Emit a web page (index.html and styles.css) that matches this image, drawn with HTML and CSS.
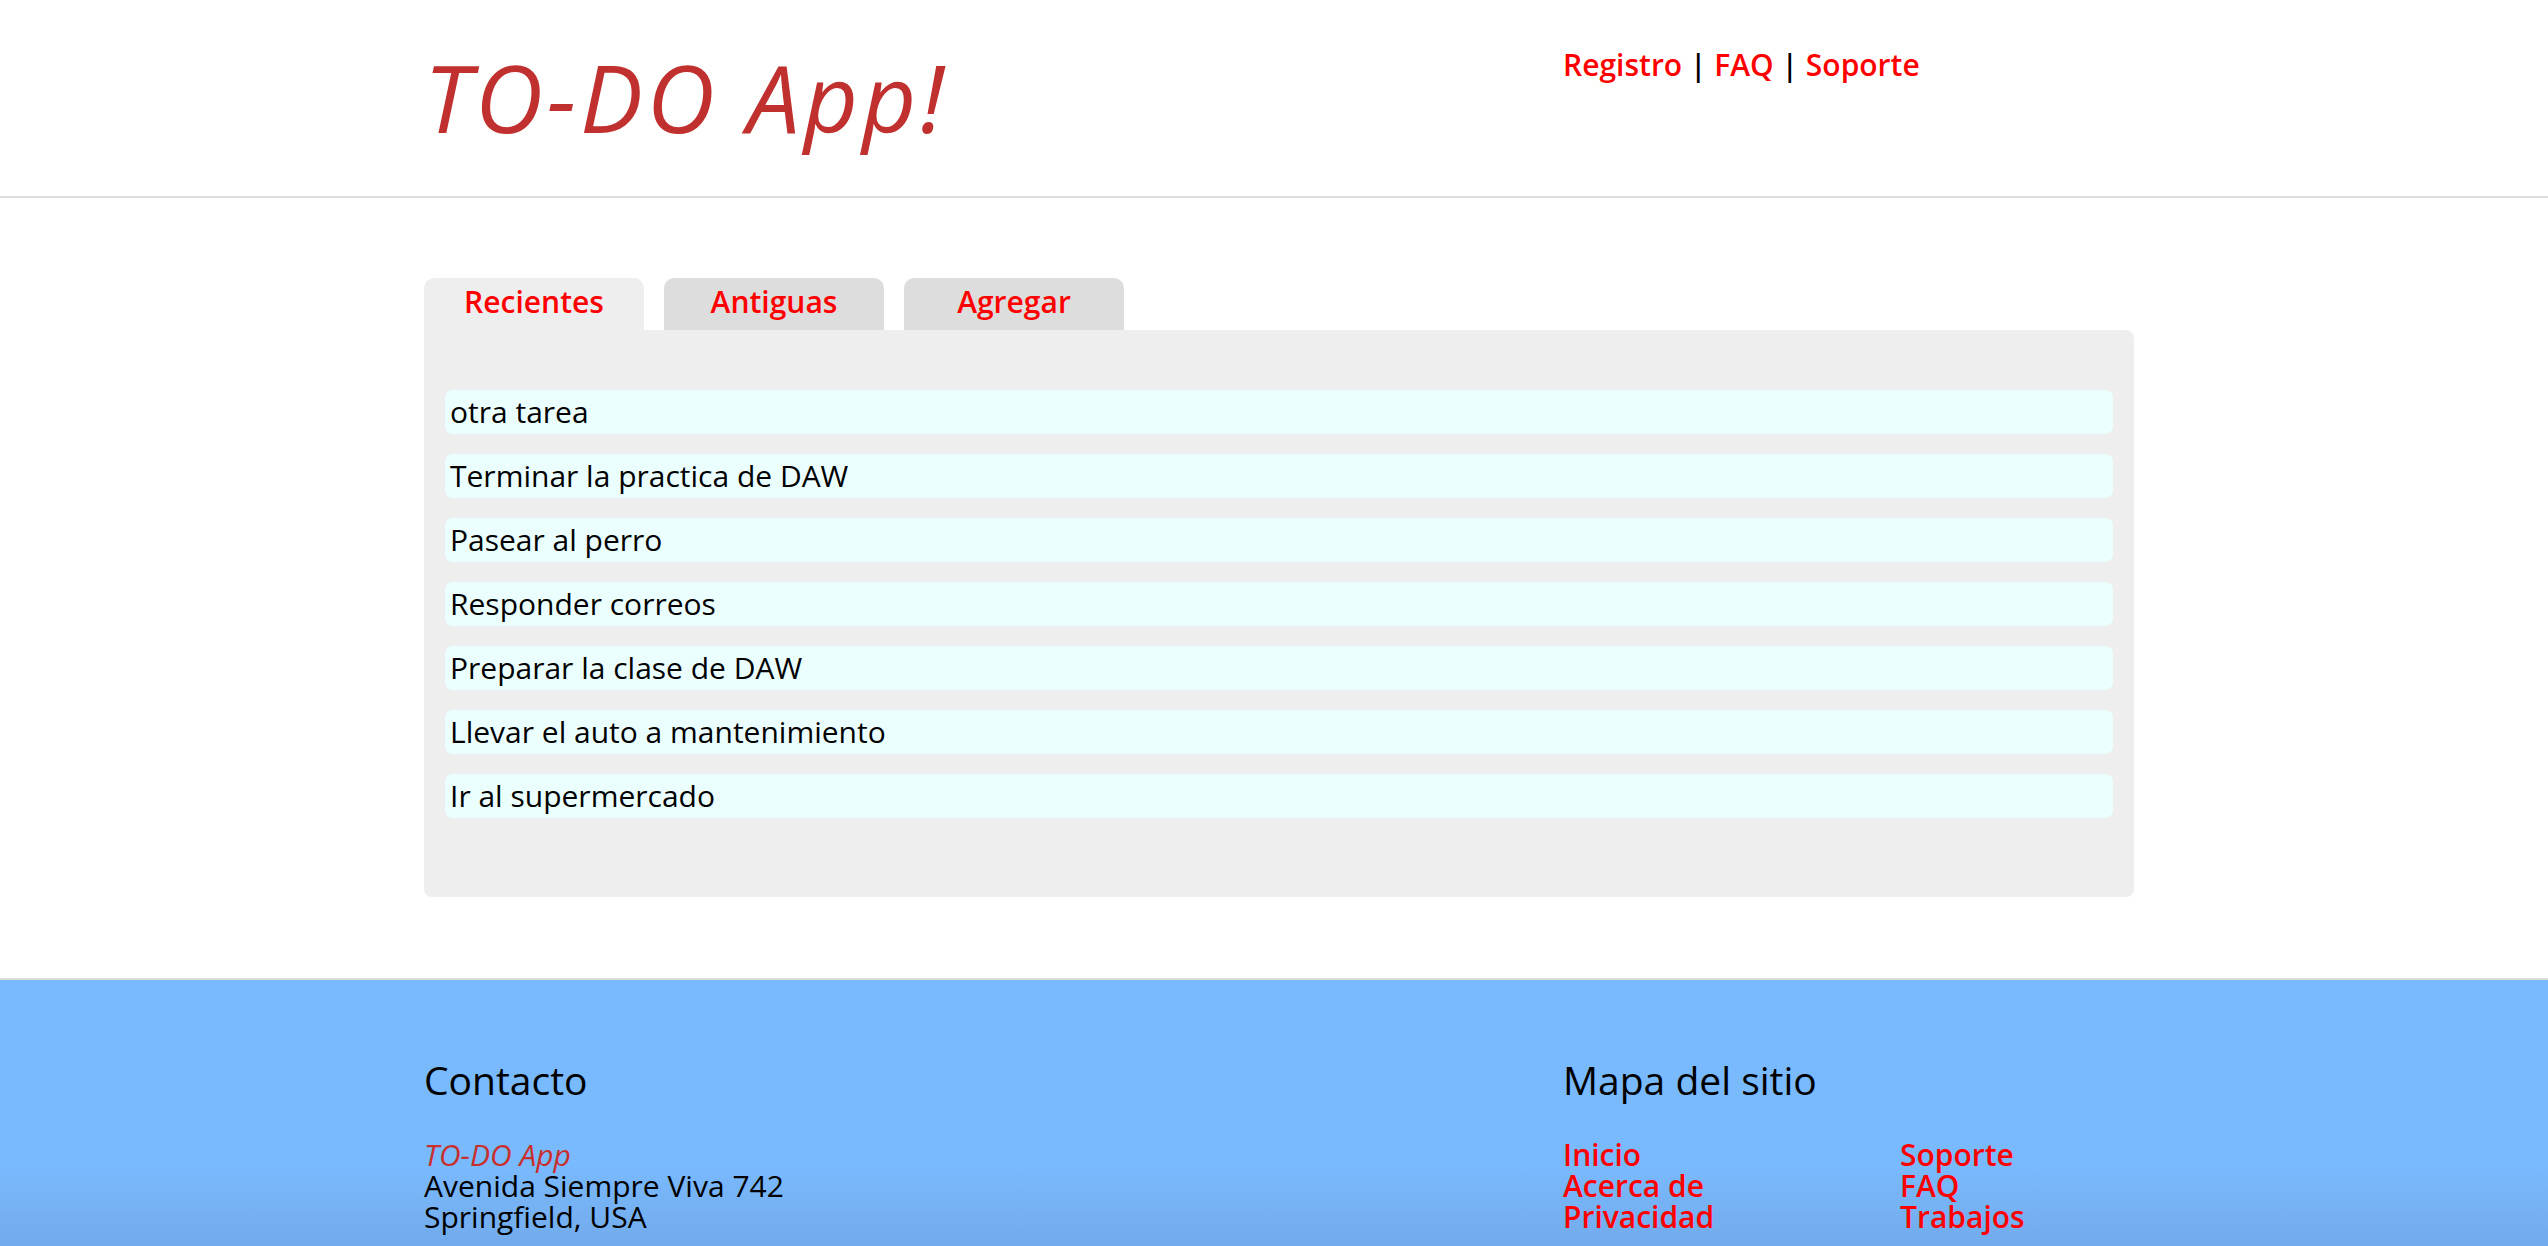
FILE: index.html
```html
<!DOCTYPE html>
<html lang="es">
<head>
<meta charset="utf-8">
<title>TO-DO App!</title>
<link rel="stylesheet" href="styles.css">
</head>
<body>
<header class="site-header">
  <div class="container header-grid">
    <h1 class="logo">TO-DO App!</h1>
    <nav class="top-nav">
      <a href="#">Registro</a> | <a href="#">FAQ</a> | <a href="#">Soporte</a>
    </nav>
  </div>
</header>

<main class="container main">
  <div class="tabs">
    <a class="tab active" href="#">Recientes</a>
    <a class="tab" href="#">Antiguas</a>
    <a class="tab" href="#">Agregar</a>
  </div>
  <section class="panel">
    <ul class="tasks">
      <li class="task">otra tarea</li>
      <li class="task">Terminar la practica de DAW</li>
      <li class="task">Pasear al perro</li>
      <li class="task">Responder correos</li>
      <li class="task">Preparar la clase de DAW</li>
      <li class="task">Llevar el auto a mantenimiento</li>
      <li class="task">Ir al supermercado</li>
    </ul>
  </section>
</main>

<footer class="site-footer">
  <div class="container footer-grid">
    <div class="contact">
      <h2 class="footer-title">Contacto</h2>
      <address class="address">
        <em class="brand">TO-DO App</em><br>
        Avenida Siempre Viva 742<br>
        Springfield, USA
      </address>
    </div>
    <div class="sitemap">
      <h2 class="footer-title">Mapa del sitio</h2>
      <div class="sitemap-cols">
        <ul class="links">
          <li><a href="#">Inicio</a></li>
          <li><a href="#">Acerca de</a></li>
          <li><a href="#">Privacidad</a></li>
        </ul>
        <ul class="links">
          <li><a href="#">Soporte</a></li>
          <li><a href="#">FAQ</a></li>
          <li><a href="#">Trabajos</a></li>
        </ul>
      </div>
    </div>
  </div>
</footer>
</body>
</html>
```

FILE: styles.css
```css
* { box-sizing: border-box; }

html, body {
  margin: 0;
  padding: 0;
  background: #ffffff;
  font-family: "Open Sans", "Noto Sans", "DejaVu Sans", sans-serif;
  color: #000;
}

a { color: #ff0000; text-decoration: none; }

.container {
  width: 1710px;
  margin-left: 424px;
}

/* Header */
.site-header {
  height: 198px;
  border-bottom: 2px solid #dddddd;
}

.header-grid {
  display: grid;
  grid-template-columns: 1139px 1fr;
}

.logo {
  margin: 50px 0 0 0;
  font-size: 94px;
  line-height: 94px;
  font-style: italic;
  font-weight: 400;
  color: #c0302e;
  letter-spacing: 4px;
}

.top-nav {
  padding-top: 49px;
  font-size: 30px;
  line-height: 32px;
  font-weight: 600;
}

/* Main */
.main {
  padding-top: 80px;
  padding-bottom: 81px;
}

.tabs {
  display: flex;
  gap: 20px;
}

.tab {
  width: 220px;
  height: 52px;
  line-height: 48px;
  text-align: center;
  font-size: 30px;
  font-weight: 600;
  background: #dddddd;
  border-radius: 10px 10px 0 0;
}

.tab.active { background: #eeeeee; }

.panel {
  height: 567px;
  background: #eeeeee;
  border-radius: 0 8px 8px 8px;
  padding: 60px 21px 0 21px;
}

.tasks {
  list-style: none;
  margin: 0;
  padding: 0;
  display: flex;
  flex-direction: column;
  gap: 20px;
}

.task {
  height: 44px;
  line-height: 43px;
  padding-left: 5px;
  font-size: 30px;
  background: #ebffff;
  border-radius: 8px;
}

/* Footer */
.site-footer {
  border-top: 2px solid #dddddd;
  background: linear-gradient(to bottom, #79b9fd 0%, #79b9fd 70%, #72abeb 100%);
  height: 268px;
  padding-top: 78px;
}

.footer-grid {
  display: grid;
  grid-template-columns: 1139px 1fr;
}

.footer-title {
  margin: 0;
  font-size: 39px;
  line-height: 44px;
  font-weight: 400;
}

.address {
  margin-top: 37px;
  font-style: normal;
  font-size: 30px;
  line-height: 31px;
}

.brand {
  color: #c8302e;
  font-style: italic;
}

.sitemap-cols {
  margin-top: 37px;
  display: grid;
  grid-template-columns: 337px auto;
}

.links {
  list-style: none;
  margin: 0;
  padding: 0;
  font-size: 30px;
  line-height: 31px;
  font-weight: 600;
}
```
